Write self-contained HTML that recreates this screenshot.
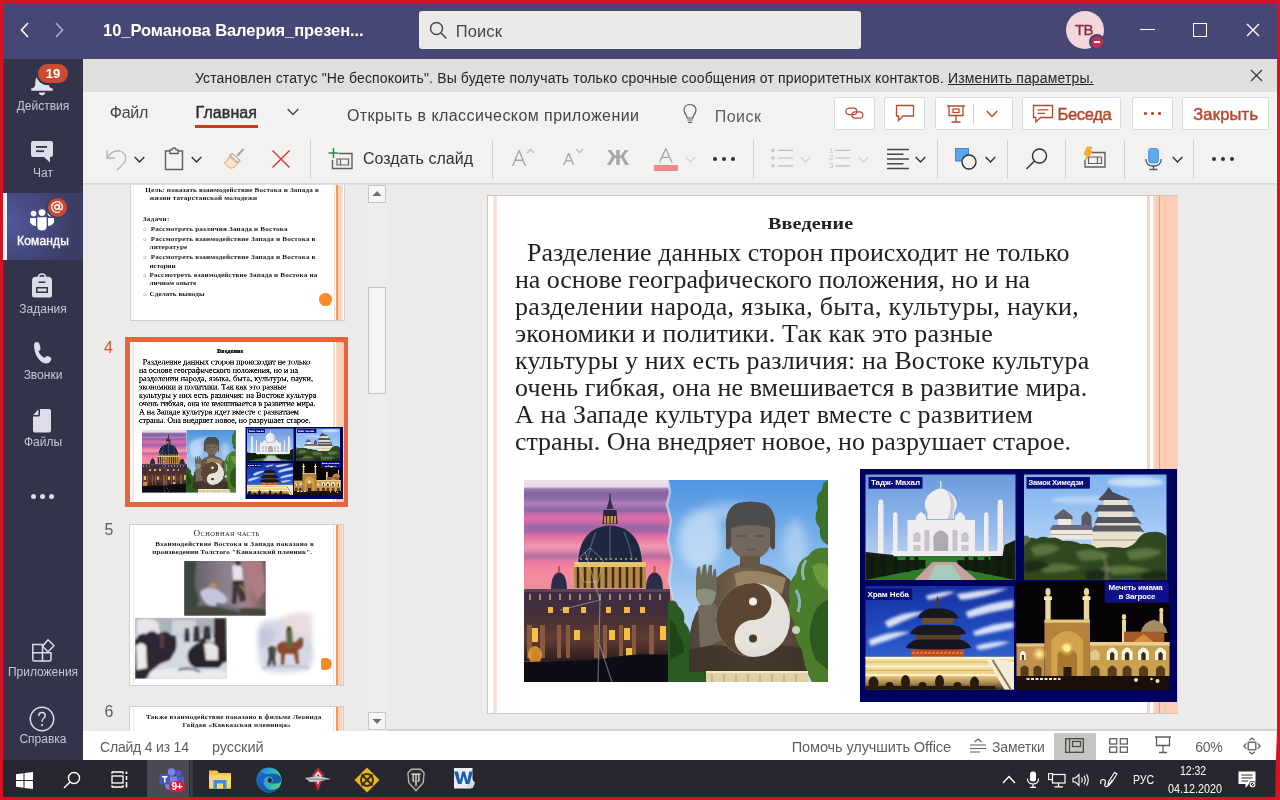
<!DOCTYPE html>
<html lang="ru">
<head>
<meta charset="utf-8">
<title>Teams</title>
<style>
*{box-sizing:border-box;margin:0;padding:0}
html,body{width:1280px;height:800px;overflow:hidden;background:#d41424;font-family:"Liberation Sans",sans-serif;}
.abs{position:absolute}
.t{position:absolute;white-space:nowrap;line-height:1}
#frame{position:absolute;left:0;top:0;width:1280px;height:800px;will-change:transform;background:#d41424;overflow:hidden}
#titlebar{position:absolute;left:3.400px;top:3.400px;width:1273.400px;height:55.600px;background:#464775}
#sidebar{position:absolute;left:3px;top:59px;width:80px;height:701px;background:#33344a}
#notif{position:absolute;left:83px;top:59px;width:1194px;height:32.500px;background:#e0dfdd}
#ribbon{position:absolute;left:83px;top:91.500px;width:1194px;height:91.500px;background:#f3f2f1}
#thumbs{position:absolute;left:83px;top:184px;width:304px;height:547px;background:#ecebe9;overflow:hidden}
#canvas{position:absolute;left:387px;top:184px;width:890px;height:547px;background:#ecebe9;overflow:hidden}
#status{position:absolute;left:83px;top:731px;width:1194px;height:29px;background:#ffffff}
#taskbar{position:absolute;left:3px;top:760px;width:1274px;height:36.500px;background:#28262f}

.lbl{position:absolute;white-space:nowrap;line-height:12px;font-size:12px;color:#c6c6d6;left:3px;width:80px;text-align:center}
.ic{position:absolute}

.btn{position:absolute;background:#fff;border:1px solid #dcdad8;border-radius:2px;top:97px;height:33px}
.sep{position:absolute;width:1px;background:#d2d0ce;top:139.500px;height:39px}
.chev{position:absolute}

.sl{position:absolute;white-space:nowrap;line-height:1;font-family:"Liberation Serif",serif;color:#222;font-size:24.600px;transform-origin:0 0}
</style>
</head>
<body>
<div id="frame">
<div id="titlebar">
<svg class="ic" style="left:16px;top:18px" width="12" height="18" viewBox="0 0 12 18"><path d="M9 2 L2.5 9 L9 16" fill="none" stroke="#ffffff" stroke-width="1.6"/></svg>
<svg class="ic" style="left:50px;top:18px" width="12" height="18" viewBox="0 0 12 18"><path d="M3 2 L9.5 9 L3 16" fill="none" stroke="#a9aad0" stroke-width="1.6"/></svg>
<span class="t" id="t_title" style="left:99.71px;top:19px;font-size:16.500px;font-weight:bold;color:#fff;letter-spacing:-0.069px">10_Романова Валерия_презен...</span>
<div class="abs" style="left:415.600px;top:7.600px;width:442px;height:38.200px;background:#eceae9;border-radius:3px"></div>
<svg class="ic" style="left:425px;top:17px" width="20" height="20" viewBox="0 0 20 20"><circle cx="8.5" cy="8.5" r="6" fill="none" stroke="#4a4a4a" stroke-width="1.5"/><path d="M13 13 L18.5 18.5" stroke="#4a4a4a" stroke-width="1.6"/></svg>
<span class="t" id="t_search" style="left:452.40px;top:19.500px;font-size:16.500px;color:#484644;letter-spacing:0.091px">Поиск</span>
<div class="abs" style="left:1062.300px;top:7.500px;width:38.500px;height:38.500px;border-radius:50%;background:#f1d6dc"></div>
<span class="t" id="t_tv" style="left:1071.500px;top:19px;font-size:15px;color:#8a2a3c;-webkit-text-stroke:0.300px #8a2a3c;letter-spacing:-0.500px">ТВ</span>
<div class="abs" style="left:1086px;top:31px;width:16px;height:16px;border-radius:50%;background:#464775"></div>
<div class="abs" style="left:1088px;top:33px;width:12px;height:12px;border-radius:50%;background:#c4314b"></div>
<div class="abs" style="left:1091px;top:38px;width:6px;height:2px;background:#fff"></div>
<div class="abs" style="left:1137px;top:25.300px;width:14.500px;height:1.100px;background:#fff"></div>
<div class="abs" style="left:1190px;top:20px;width:14px;height:14px;border:1.5px solid #fff"></div>
<svg class="ic" style="left:1243px;top:20px" width="14" height="14" viewBox="0 0 14 14"><path d="M1 1 L13 13 M13 1 L1 13" stroke="#fff" stroke-width="1.4"/></svg>
</div>
<div id="sidebar"><div class="abs" style="left:-3px;top:-59px;width:86px;height:760px">
<!-- activity -->
<svg class="ic" style="left:30px;top:74px" width="24" height="23" viewBox="0 0 24 23"><path d="M12 0.800 C7.500 0.800 5.600 4 5.400 7.500 L5.200 10.800 C5 12.800 4 13.800 2.800 14.200 L1.300 14.200 L1.300 16.800 L22.700 16.800 L22.700 14.200 L21.200 14.200 C20 13.800 19 12.800 18.800 10.800 L18.600 7.500 C18.400 4 16.500 0.800 12 0.800 Z" fill="#e2e2ee"/><path d="M8.800 18.600 L15.200 18.600 C15.200 20.300 13.800 21.400 12 21.400 C10.200 21.400 8.800 20.300 8.800 18.600 Z" fill="#e2e2ee"/></svg>
<div class="abs" style="left:36.400px;top:61.700px;width:33.200px;height:23.200px;border-radius:11.600px;background:#33344a"></div>
<div class="abs" style="left:38.400px;top:63.700px;width:29.200px;height:19.200px;border-radius:9.600px;background:#cc4a31"></div>
<span class="t" id="t_b19" style="left:45.800px;top:66.800px;font-size:13px;font-weight:bold;color:#fff">19</span>
<span class="lbl" id="t_l1" style="top:100px">Действия</span>
<!-- chat -->
<svg class="ic" style="left:30px;top:140px" width="24" height="24" viewBox="0 0 24 24"><path d="M3 1 L21 1 Q23 1 23 3 L23 15 Q23 17 21 17 L20 17 L20 22.5 L14 17 L3 17 Q1 17 1 15 L1 3 Q1 1 3 1 Z" fill="#dcdcea"/><rect x="6" y="6" width="11" height="1.8" fill="#33344a"/><rect x="6" y="10.3" width="8" height="1.8" fill="#33344a"/></svg>
<span class="lbl" id="t_l2" style="top:167px">Чат</span>
<!-- teams active -->
<div class="abs" style="left:3px;top:193px;width:80px;height:67px;background:radial-gradient(ellipse 70px 60px at 0px 30px,#5259a0,#3c3e66)"></div>
<div class="abs" style="left:3px;top:193px;width:3.5px;height:67px;background:#f3f2f8"></div>
<svg class="ic" style="left:29px;top:209px" width="26" height="22" viewBox="0 0 26 22"><circle cx="4.6" cy="4.6" r="2.8" fill="#fff"/><circle cx="21.4" cy="4.6" r="2.8" fill="#fff"/><circle cx="13" cy="3.6" r="3.4" fill="#fff"/><path d="M1 9 L7 9 L7 17 Q3.500 17 1 13.500 Z" fill="#fff"/><path d="M25 9 L19 9 L19 17 Q22.500 17 25 13.500 Z" fill="#fff"/><path d="M8.300 8.200 L17.700 8.200 L17.700 17 Q17.700 21.500 13 21.500 Q8.300 21.500 8.300 17 Z" fill="#fff"/></svg>
<div class="abs" style="left:46px;top:196px;width:22px;height:22px;border-radius:50%;background:#3c3e66"></div>
<div class="abs" style="left:47.500px;top:197.500px;width:19px;height:19px;border-radius:50%;background:#cc4a31"></div>
<svg class="ic" style="left:50px;top:200px" width="14" height="14" viewBox="0 0 14 14"><circle cx="7" cy="7" r="2.300" fill="none" stroke="#fff" stroke-width="1.400"/><path d="M9.400 4.600 L9.400 8.300 Q9.400 9.700 10.700 9.700 Q12.300 9.700 12.300 7 A5.300 5.300 0 1 0 9.800 11.500" fill="none" stroke="#fff" stroke-width="1.300"/></svg>
<span class="lbl" id="t_l3" style="top:235px;color:#fff;-webkit-text-stroke:0.400px #fff;letter-spacing:0.150px">Команды</span>
<!-- assignments -->
<svg class="ic" style="left:31px;top:273px" width="22" height="25" viewBox="0 0 22 25"><path d="M7.500 4 Q7.500 1 11 1 Q14.500 1 14.500 4" fill="none" stroke="#dcdcea" stroke-width="1.600"/><path d="M5 3.800 L17 3.800 Q21 3.800 21 8 L21 22 Q21 24.500 18.500 24.500 L3.500 24.500 Q1 24.500 1 22 L1 8 Q1 3.800 5 3.800 Z" fill="#dcdcea"/><rect x="7.500" y="8.500" width="7" height="1.500" fill="#33344a"/><rect x="5" y="14" width="12" height="6" fill="#33344a"/><rect x="6.500" y="15.500" width="9" height="3" fill="#dcdcea"/></svg>
<span class="lbl" id="t_l4" style="top:303px">Задания</span>
<!-- calls -->
<svg class="ic" style="left:32px;top:341px" width="20" height="24" viewBox="0 0 20 24"><path d="M2 4 Q2 1 5 1 Q7 1 7.500 3 L8.500 7 Q9 8.500 7.500 9.500 L6.500 10.300 Q8 14.500 12.500 17 L13.700 15.700 Q14.800 14.500 16.300 15.200 L18.500 16.300 Q20 17.200 19 19.300 Q17.500 22.500 14 22.500 Q9 22 5.500 16.500 Q2 11 2 4 Z" fill="#dcdcea"/></svg>
<span class="lbl" id="t_l5" style="top:369px">Звонки</span>
<!-- files -->
<svg class="ic" style="left:32px;top:408px" width="20" height="25" viewBox="0 0 20 25"><path d="M8 1 L17 1 Q19 1 19 3 L19 22.500 Q19 24.500 17 24.500 L3 24.500 Q1 24.500 1 22.500 L1 8.500 L6.500 8.500 Q8 8.500 8 7 Z" fill="#dcdcea"/><path d="M6.500 1.300 L6.500 7 L1.200 7 Z" fill="#dcdcea"/></svg>
<span class="lbl" id="t_l6" style="top:436px">Файлы</span>
<!-- more -->
<div class="abs" style="left:30.500px;top:493.500px;width:5px;height:5px;border-radius:50%;background:#dcdcea"></div>
<div class="abs" style="left:39.500px;top:493.500px;width:5px;height:5px;border-radius:50%;background:#dcdcea"></div>
<div class="abs" style="left:48.500px;top:493.500px;width:5px;height:5px;border-radius:50%;background:#dcdcea"></div>
<!-- apps -->
<svg class="ic" style="left:31px;top:638px" width="25" height="25" viewBox="0 0 25 25"><path d="M1.800 6.500 L11.500 6.500 L11.500 23 L3.300 23 Q1.800 23 1.800 21.500 Z M1.800 14.700 L20 14.700 L20 21.500 Q20 23 18.500 23 L11.500 23" fill="none" stroke="#dcdcea" stroke-width="1.500"/><path d="M17 1.800 L23 7.800 L17 13.800 L11.500 8.300 Z" fill="none" stroke="#dcdcea" stroke-width="1.500" stroke-linejoin="round"/></svg>
<span class="lbl" id="t_l7" style="top:666px">Приложения</span>
<!-- help -->
<svg class="ic" style="left:29px;top:706px" width="26" height="26" viewBox="0 0 26 26"><circle cx="13" cy="13" r="11.700" fill="none" stroke="#dcdcea" stroke-width="1.500"/><path d="M9.800 10 Q9.800 6.500 13 6.500 Q16.200 6.500 16.200 9.500 Q16.200 11.300 14.500 12.500 Q13 13.600 13 15.800" fill="none" stroke="#dcdcea" stroke-width="1.500"/><circle cx="13" cy="19" r="1.100" fill="#dcdcea"/></svg>
<span class="lbl" id="t_l8" style="top:733px">Справка</span>
</div></div>
<div class="abs" style="left:3px;top:59px;width:1.200px;height:134px;background:#7a2036"></div><div class="abs" style="left:4.200px;top:59px;width:1.300px;height:134px;background:#45304c"></div><div class="abs" style="left:3px;top:260px;width:1.200px;height:500px;background:#7a2036"></div><div class="abs" style="left:4.200px;top:260px;width:1.300px;height:500px;background:#45304c"></div>
<div id="notif"></div>
<span class="t" id="t_notif" style="left:195.00px;top:70.500px;font-size:14px;letter-spacing:0.137px;color:#252423">Установлен статус "Не беспокоить". Вы будете получать только срочные сообщения от приоритетных контактов. <span style="text-decoration:underline">Изменить параметры.</span></span>
<svg class="ic" style="left:1250px;top:69px" width="13" height="13" viewBox="0 0 13 13"><path d="M1 1 L12 12 M12 1 L1 12" stroke="#3b3a39" stroke-width="1.300"/></svg>
<div id="ribbon"></div>
<div class="abs" style="left:83px;top:183px;width:1194px;height:1px;background:#d6d5d3"></div>
<span class="t" id="t_file" style="left:109.75px;top:105px;font-size:16px;color:#484644;letter-spacing:-0.231px">Файл</span>
<span class="t" id="t_home" style="left:195.60px;top:105px;font-size:16px;color:#323130;-webkit-text-stroke:0.450px #323130;letter-spacing:0.082px">Главная</span>
<div class="abs" style="left:195px;top:125px;width:63px;height:3px;background:#c43e1c"></div>
<svg class="ic" style="left:287px;top:108px" width="12" height="8.5" viewBox="0 0 12 8.5"><path d="M0.700 1 L6.0 6.5 L11.3 1" fill="none" stroke="#484644" stroke-width="1.4"/></svg>
<span class="t" id="t_open" style="left:346.90px;top:108px;font-size:16px;color:#484644;letter-spacing:0.428px">Открыть в классическом приложении</span>
<svg class="ic" style="left:681px;top:103px" width="18" height="22" viewBox="0 0 18 22"><path d="M9 1.500 C5 1.500 3 4.300 3 7.200 C3 9.500 4.300 10.800 5.300 12.200 C5.900 13.100 6 13.800 6 15 L12 15 C12 13.800 12.100 13.100 12.700 12.200 C13.700 10.800 15 9.500 15 7.200 C15 4.300 13 1.500 9 1.500 Z" fill="none" stroke="#605e5c" stroke-width="1.200"/><path d="M6.300 17 L11.700 17 M7 19.300 L11 19.300" stroke="#605e5c" stroke-width="1.200"/></svg>
<span class="t" id="t_rsearch" style="left:714.70px;top:108.500px;font-size:16px;color:#605e5c;letter-spacing:0.489px">Поиск</span>
<div class="btn" style="left:834px;width:41px"></div>
<svg class="ic" style="left:845px;top:107px" width="19" height="13" viewBox="0 0 19 13"><rect x="0.800" y="1.200" width="11" height="6.400" rx="3.200" fill="none" stroke="#b7472a" stroke-width="1.200"/><rect x="6.800" y="4.800" width="11" height="6.400" rx="3.200" fill="none" stroke="#b7472a" stroke-width="1.200"/></svg>
<div class="btn" style="left:884px;width:41px"></div>
<svg class="ic" style="left:895px;top:104px" width="20" height="18" viewBox="0 0 20 18"><path d="M1.500 1.500 L18.500 1.500 L18.500 12 L8 12 L3.500 16.500 L3.500 12 L1.500 12 Z" fill="none" stroke="#b7472a" stroke-width="1.300"/></svg>
<div class="btn" style="left:935px;width:78px"></div>
<svg class="ic" style="left:946px;top:104px" width="20" height="20" viewBox="0 0 20 20"><path d="M1 2 L19 2 M3 2 L3 11.500 L17 11.500 L17 2 M10 11.500 L10 17.500 M5.500 18 L14.500 18" fill="none" stroke="#b7472a" stroke-width="1.300"/><rect x="7" y="5" width="6" height="3.500" fill="none" stroke="#b7472a" stroke-width="1.200"/></svg>
<div class="abs" style="left:973px;top:104px;width:1px;height:20px;background:#d2d0ce"></div>
<svg class="ic" style="left:986px;top:110px" width="12" height="8.5" viewBox="0 0 12 8.5"><path d="M0.700 1 L6.0 6.5 L11.3 1" fill="none" stroke="#b7472a" stroke-width="1.4"/></svg>
<div class="btn" style="left:1022px;width:99px"></div>
<svg class="ic" style="left:1032px;top:104px" width="22" height="20" viewBox="0 0 22 20"><path d="M1.500 1.500 L20.500 1.500 L20.500 13.500 L8.500 13.500 L3.800 18 L3.800 13.500 L1.500 13.500 Z" fill="none" stroke="#b7472a" stroke-width="1.300"/><path d="M5.500 5.800 L16.500 5.800 M5.500 9.300 L13 9.300" stroke="#b7472a" stroke-width="1.200"/></svg>
<span class="t" id="t_beseda" style="left:1057.50px;top:105.500px;font-size:16.500px;color:#b7472a;-webkit-text-stroke:0.450px #b7472a;letter-spacing:-0.355px">Беседа</span>
<div class="btn" style="left:1132px;width:41px"></div>
<div class="abs" style="left:1144px;top:112px;width:2.500px;height:2.500px;border-radius:50%;background:#b7472a"></div>
<div class="abs" style="left:1151px;top:112px;width:2.500px;height:2.500px;border-radius:50%;background:#b7472a"></div>
<div class="abs" style="left:1158px;top:112px;width:2.500px;height:2.500px;border-radius:50%;background:#b7472a"></div>
<div class="btn" style="left:1182px;width:87px"></div>
<span class="t" id="t_close" style="left:1193.20px;top:105.500px;font-size:16.500px;color:#b7472a;-webkit-text-stroke:0.450px #b7472a;letter-spacing:0.206px">Закрыть</span>

<!-- toolbar -->
<svg class="ic" style="left:105px;top:147px" width="24" height="24" viewBox="0 0 24 24"><path d="M2 3 L2 11 L10 11" fill="none" stroke="#b3b0ad" stroke-width="1.300"/><path d="M2.500 10.500 Q8 2.500 15 4 Q21.500 6 20.500 12.500 Q20 16 12 23" fill="none" stroke="#b3b0ad" stroke-width="1.300"/></svg>
<svg class="ic" style="left:134px;top:156px" width="11" height="8" viewBox="0 0 11 8"><path d="M0.700 1 L5.5 6 L10.3 1" fill="none" stroke="#323130" stroke-width="1.4"/></svg>
<svg class="ic" style="left:164px;top:147px" width="20" height="24" viewBox="0 0 20 24"><path d="M6 4 L1.500 4 L1.500 22.500 L18.500 22.500 L18.500 4 L14 4" fill="none" stroke="#605e5c" stroke-width="1.400"/><path d="M6 6.500 L6 2.800 L8 2.800 Q8 1 10 1 Q12 1 12 2.800 L14 2.800 L14 6.500 Z" fill="none" stroke="#605e5c" stroke-width="1.300"/></svg>
<svg class="ic" style="left:191px;top:156px" width="11" height="8" viewBox="0 0 11 8"><path d="M0.700 1 L5.5 6 L10.3 1" fill="none" stroke="#323130" stroke-width="1.4"/></svg>
<svg class="ic" style="left:223px;top:147px" width="23" height="24" viewBox="0 0 23 24"><path d="M20.500 2 L14 9" stroke="#a8a6a4" stroke-width="2.200"/><path d="M9 6.500 L17 13.500 L15 15.500 L7 8.500 Z" fill="#fff" stroke="#a8a6a4" stroke-width="1.100"/><path d="M6.500 9.500 L14.500 16.500 Q11 22 7.500 21 Q4.500 20 1.500 16 Q5 13.500 6.500 9.500 Z" fill="#fbe3cc" stroke="#e8b68a" stroke-width="1.100"/></svg>
<svg class="ic" style="left:271px;top:149px" width="20" height="20" viewBox="0 0 20 20"><path d="M1.500 1.500 L18.500 18.500 M18.500 1.500 L1.500 18.500" stroke="#d13438" stroke-width="1.400"/></svg>
<div class="sep" style="left:310px"></div>
<svg class="ic" style="left:327.500px;top:146.500px" width="26" height="24" viewBox="0 0 26 24"><path d="M11 6.500 L24 6.500 L24 21.500 L4.500 21.500 L4.500 13" fill="none" stroke="#605e5c" stroke-width="1.400"/><path d="M9 12 L20.500 12 L20.500 18 L9 18 Z M12.500 12 L12.500 18" fill="none" stroke="#605e5c" stroke-width="1.200"/><path d="M5.500 1 L5.500 11 M0.500 6 L10.500 6" stroke="#2e8b3d" stroke-width="1.500"/></svg>
<span class="t" id="t_new" style="left:363.00px;top:151px;font-size:16px;color:#323130;letter-spacing:0.020px">Создать слайд</span>
<div class="sep" style="left:492px"></div>
<svg class="ic" style="left:512.3px;top:149.5px" width="14" height="16" viewBox="0 0 14 16"><path d="M0.600 16 L7.0 0.500 L13.4 16 M3.08 10.24 L10.92 10.24" fill="none" stroke="#a6a4a2" stroke-width="1.3" stroke-linejoin="miter"/></svg>
<svg class="ic" style="left:526px;top:148px" width="9" height="6" viewBox="0 0 9 6"><path d="M1 5 L4.500 1.500 L8 5" fill="none" stroke="#a4c8ea" stroke-width="1.600"/></svg>
<svg class="ic" style="left:562.6px;top:153.3px" width="11.4" height="12.2" viewBox="0 0 11.4 12.2"><path d="M0.600 12.2 L5.7 0.500 L10.8 12.2 M2.51 7.81 L8.89 7.81" fill="none" stroke="#a6a4a2" stroke-width="1.3" stroke-linejoin="miter"/></svg>
<svg class="ic" style="left:575px;top:148px" width="9" height="6" viewBox="0 0 9 6"><path d="M1 1 L4.500 4.500 L8 1" fill="none" stroke="#a4c8ea" stroke-width="1.600"/></svg>
<span class="t" id="t_zh" style="left:607px;top:147px;font-size:22px;font-weight:bold;color:#a8a6a4;transform:scaleX(1.100);transform-origin:0 0">Ж</span>
<svg class="ic" style="left:659.2px;top:148px" width="13.6" height="14.6" viewBox="0 0 13.6 14.6"><path d="M0.600 14.6 L6.8 0.500 L13.0 14.6 M2.99 9.34 L10.61 9.34" fill="none" stroke="#a6a4a2" stroke-width="1.3" stroke-linejoin="miter"/></svg>
<div class="abs" style="left:654px;top:165px;width:24px;height:6px;background:#f1888c"></div>
<svg class="ic" style="left:685px;top:156px" width="11" height="8" viewBox="0 0 11 8"><path d="M0.700 1 L5.5 6 L10.3 1" fill="none" stroke="#d6d4d2" stroke-width="1.3"/></svg><div class="abs" style="left:712.5px;top:156.5px;width:4px;height:4px;border-radius:50%;background:#323130"></div><div class="abs" style="left:721.5px;top:156.5px;width:4px;height:4px;border-radius:50%;background:#323130"></div><div class="abs" style="left:730.5px;top:156.5px;width:4px;height:4px;border-radius:50%;background:#323130"></div>
<div class="sep" style="left:753px"></div>
<svg class="ic" style="left:771px;top:147px" width="24" height="22" viewBox="0 0 24 22"><rect x="0.500" y="1.800" width="3" height="3" fill="#a9cbe8"/><rect x="0.500" y="9.500" width="3" height="3" fill="#a9cbe8"/><rect x="0.500" y="17.300" width="3" height="3" fill="#a9cbe8"/><path d="M7 3.300 L22 3.300 M7 11 L22 11 M7 18.800 L22 18.800" stroke="#bebcba" stroke-width="1.200"/></svg>
<svg class="ic" style="left:800px;top:156px" width="11" height="8" viewBox="0 0 11 8"><path d="M0.700 1 L5.5 6 L10.3 1" fill="none" stroke="#d6d4d2" stroke-width="1.3"/></svg>
<svg class="ic" style="left:828px;top:147px" width="24" height="22" viewBox="0 0 24 22"><path d="M7.500 3.300 L22 3.300 M7.500 11 L22 11 M7.500 18.800 L22 18.800" stroke="#bebcba" stroke-width="1.200"/></svg>
<span class="t" style="left:829px;top:146.500px;font-size:8px;color:#a9cbe8">1</span>
<span class="t" style="left:829px;top:154.200px;font-size:8px;color:#a9cbe8">2</span>
<span class="t" style="left:829px;top:162px;font-size:8px;color:#a9cbe8">3</span>
<svg class="ic" style="left:858px;top:156px" width="11" height="8" viewBox="0 0 11 8"><path d="M0.700 1 L5.5 6 L10.3 1" fill="none" stroke="#d6d4d2" stroke-width="1.3"/></svg>
<svg class="ic" style="left:887px;top:147.500px" width="22" height="22" viewBox="0 0 22 22"><path d="M0 1.500 L22 1.500 M0 6.250 L16.500 6.250 M0 11 L22 11 M0 15.750 L16.500 15.750 M0 20.500 L22 20.500" stroke="#484644" stroke-width="1.300"/></svg>
<svg class="ic" style="left:915px;top:156px" width="11" height="8" viewBox="0 0 11 8"><path d="M0.700 1 L5.5 6 L10.3 1" fill="none" stroke="#323130" stroke-width="1.4"/></svg>
<div class="sep" style="left:937px"></div>
<svg class="ic" style="left:954px;top:147px" width="25" height="24" viewBox="0 0 25 24"><rect x="1.500" y="1.500" width="13" height="12.500" fill="#5aa5ee" stroke="#3b86d6" stroke-width="1"/><circle cx="15" cy="15" r="7" fill="#f3f2f1" stroke="#323130" stroke-width="1.400"/></svg>
<svg class="ic" style="left:985px;top:156px" width="11" height="8" viewBox="0 0 11 8"><path d="M0.700 1 L5.5 6 L10.3 1" fill="none" stroke="#323130" stroke-width="1.4"/></svg>
<div class="sep" style="left:1007px"></div>
<svg class="ic" style="left:1025px;top:147px" width="24" height="24" viewBox="0 0 24 24"><circle cx="14.500" cy="9" r="7" fill="none" stroke="#323130" stroke-width="1.400"/><path d="M9.500 14 L1.500 22" stroke="#323130" stroke-width="1.500"/></svg>
<div class="sep" style="left:1065px"></div>
<svg class="ic" style="left:1082px;top:146px" width="26" height="24" viewBox="0 0 26 24"><path d="M6 6.500 L23 6.500 L23 21 L3 21 L3 14" fill="none" stroke="#605e5c" stroke-width="1.400"/><path d="M6.500 11 L19.500 11 L19.500 17.500 L6.500 17.500 Z M15.500 11 L15.500 17.500" fill="none" stroke="#605e5c" stroke-width="1.200"/><path d="M5 1 L10 1 L7.500 5.500 L10.500 5.500 L3 15 L5 8.500 L2 8.500 Z" fill="#f7b23a" stroke="#e08e1a" stroke-width="0.600"/></svg>
<div class="sep" style="left:1124px"></div>
<svg class="ic" style="left:1143px;top:147px" width="21" height="24" viewBox="0 0 21 24"><rect x="5.600" y="1.500" width="9.800" height="14.500" rx="2.500" fill="#62aaee" stroke="#3b86d6" stroke-width="0.800"/><path d="M2.800 12 Q2.800 19 10.500 19 Q18.200 19 18.200 12" fill="none" stroke="#4a5a6a" stroke-width="1.300"/><path d="M10.500 19 L10.500 22.500 M6.500 22.500 L14.500 22.500" stroke="#4a5a6a" stroke-width="1.300"/></svg>
<svg class="ic" style="left:1171.5px;top:156px" width="11" height="8" viewBox="0 0 11 8"><path d="M0.700 1 L5.5 6 L10.3 1" fill="none" stroke="#323130" stroke-width="1.4"/></svg>
<div class="sep" style="left:1193px"></div>
<div class="abs" style="left:1211.5px;top:156.5px;width:4px;height:4px;border-radius:50%;background:#323130"></div><div class="abs" style="left:1220.5px;top:156.5px;width:4px;height:4px;border-radius:50%;background:#323130"></div><div class="abs" style="left:1229.5px;top:156.5px;width:4px;height:4px;border-radius:50%;background:#323130"></div>
<!--THUMBS--><div id="thumbs"><div class="abs" style="left:-83px;top:-184px;width:1280px;height:800px">
<div class="abs" style="left:366px;top:184px;width:21px;height:547px;background:#eeedeb"></div>
<div class="abs" style="left:386.500px;top:184px;width:1px;height:547px;background:#d8d7d5"></div>
<div class="abs" style="left:367.500px;top:184.500px;width:18px;height:18px;background:#f6f6f6;border:1px solid #c6c6c6"></div>
<svg class="ic" style="left:371.500px;top:190px" width="10" height="7" viewBox="0 0 10 7"><path d="M0.500 6 L5 1 L9.500 6 Z" fill="#6e6e72"/></svg>
<div class="abs" style="left:367.500px;top:286.500px;width:18px;height:107px;background:#f5f5f5;border:1px solid #c4c4c4"></div>
<div class="abs" style="left:367.500px;top:711.500px;width:18px;height:18px;background:#f6f6f6;border:1px solid #c6c6c6"></div>
<svg class="ic" style="left:371.500px;top:718px" width="10" height="7" viewBox="0 0 10 7"><path d="M0.500 1 L5 6 L9.500 1 Z" fill="#6e6e72"/></svg>
<div class="abs" style="left:129.5px;top:158.5px;width:215px;height:162px;background:#fff;border:1px solid #cfcecd"></div>
<div class="abs" style="left:132.7px;top:159.5px;width:1.200px;height:160px;background:#fcebe2"></div><div class="abs" style="left:333.5px;top:159.5px;width:1px;height:160px;background:#fbe3d6"></div><div class="abs" style="left:336.0px;top:159.5px;width:2px;height:160px;background:#f59858"></div><div class="abs" style="left:338.0px;top:159.5px;width:3.700px;height:160px;background:#fcd4bc"></div><div class="abs" style="left:341.7px;top:159.5px;width:1.800px;height:160px;background:#fde6da"></div>
<div class="abs" style="left:319px;top:293px;width:12.800px;height:12.800px;border-radius:50%;background:#f98a2c"></div>
<div class="abs" style="left:130.5px;top:159.5px;width:690px;height:518px;transform:scale(0.3087);transform-origin:0 0">
<span class="sl" id="t_3_0" style="left:46.33px;top:86.6px;font-size:21px;font-weight:bold;color:#1a1a1a;transform:scaleX(1.100);letter-spacing:0.503px">Цель: показать взаимодействие Востока и Запада в</span>
<span class="sl" id="t_3_1" style="left:59.94px;top:112.5px;font-size:21px;font-weight:bold;color:#1a1a1a;transform:scaleX(1.100);letter-spacing:0.507px">жизни татарстанской молодежи</span>
<span class="sl" id="t_3_2" style="left:38.24px;top:179.8px;font-size:21px;font-weight:bold;color:#1a1a1a;transform:scaleX(1.100);letter-spacing:0.969px">Задачи:</span>
<span class="sl" id="t_3_3" style="left:64.15px;top:213.0px;font-size:21px;font-weight:bold;color:#1a1a1a;transform:scaleX(1.100);letter-spacing:0.521px">Рассмотреть различия Запада и Востока</span>
<span class="sl" style="left:39.8px;top:214.0px;font-size:18px;color:#f08030;font-family:'Liberation Sans',sans-serif">o</span>
<span class="sl" id="t_3_4" style="left:64.15px;top:245.0px;font-size:21px;font-weight:bold;color:#1a1a1a;transform:scaleX(1.100);letter-spacing:0.539px">Рассмотреть взаимодействие Запада и Востока в</span>
<span class="sl" style="left:39.8px;top:246.0px;font-size:18px;color:#f08030;font-family:'Liberation Sans',sans-serif">o</span>
<span class="sl" id="t_3_5" style="left:59.94px;top:272.2px;font-size:21px;font-weight:bold;color:#1a1a1a;transform:scaleX(1.100);letter-spacing:0.480px">литературе</span>
<span class="sl" id="t_3_6" style="left:64.15px;top:303.7px;font-size:21px;font-weight:bold;color:#1a1a1a;transform:scaleX(1.100);letter-spacing:0.539px">Рассмотреть взаимодействие Запада и Востока в</span>
<span class="sl" style="left:39.8px;top:304.7px;font-size:18px;color:#f08030;font-family:'Liberation Sans',sans-serif">o</span>
<span class="sl" id="t_3_7" style="left:59.94px;top:332.8px;font-size:21px;font-weight:bold;color:#1a1a1a;transform:scaleX(1.100);letter-spacing:-0.213px">истории</span>
<span class="sl" id="t_3_8" style="left:59.94px;top:362.0px;font-size:21px;font-weight:bold;color:#1a1a1a;transform:scaleX(1.100);letter-spacing:0.473px">Рассмотреть взаимодействие Запада и Востока на</span>
<span class="sl" style="left:39.8px;top:363.0px;font-size:18px;color:#f08030;font-family:'Liberation Sans',sans-serif">o</span>
<span class="sl" id="t_3_9" style="left:59.94px;top:389.2px;font-size:21px;font-weight:bold;color:#1a1a1a;transform:scaleX(1.100);letter-spacing:0.101px">личном опыте</span>
<span class="sl" id="t_3_10" style="left:59.94px;top:422.9px;font-size:21px;font-weight:bold;color:#1a1a1a;transform:scaleX(1.100);letter-spacing:0.200px">Сделать выводы</span>
<span class="sl" style="left:39.8px;top:423.9px;font-size:18px;color:#f08030;font-family:'Liberation Sans',sans-serif">o</span>
</div>
<div class="abs" style="left:125px;top:337.300px;width:223.200px;height:169.500px;background:#e5643c"></div>
<div class="abs" style="left:129.7px;top:341.8px;width:213.700px;height:160.200px;background:#fff"></div>
<div class="abs" style="left:132.4px;top:342px;width:1.200px;height:160px;background:#fcebe2"></div><div class="abs" style="left:333.2px;top:342px;width:1px;height:160px;background:#fbe3d6"></div><div class="abs" style="left:335.7px;top:342px;width:2px;height:160px;background:#f59858"></div><div class="abs" style="left:337.7px;top:342px;width:3.700px;height:160px;background:#fcd4bc"></div><div class="abs" style="left:341.4px;top:342px;width:1.800px;height:160px;background:#fde6da"></div>
<div class="abs" style="left:-20.29px;top:281.65px;width:1280px;height:800px;transform:scale(0.3087);transform-origin:0 0;-webkit-text-stroke:0.900px #222"><div class="abs" style="left:493px;top:196px;width:4px;height:517px;background:linear-gradient(90deg,#fdeee8,#f8d8cc 50%,#fcece4)"></div>
<div class="abs" style="left:1146.500px;top:196px;width:3px;height:517px;background:#f9d3c7"></div>
<div class="abs" style="left:1153px;top:196px;width:24.500px;height:517px;background:#fdcdb8"></div>
<div class="abs" style="left:1153px;top:196px;width:1.500px;height:517px;background:#f7dccf"></div>
<div class="abs" style="left:1159px;top:196px;width:1.200px;height:517px;background:#e29c7e"></div>
<div class="abs" style="left:1165px;top:196px;width:1px;height:517px;background:#f6bfa6"></div>
<svg class="ic" style="left:524px;top:480px" width="304" height="202" viewBox="524 480 304 202"><use href="#g_img1"/></svg>
<svg class="ic" style="left:859.500px;top:469px" width="317.500" height="233" viewBox="859.500 469 317.500 233"><use href="#g_img2"/></svg>
<span class="t" style="-webkit-text-stroke:0;left:871px;top:479px;font-size:8px;font-weight:bold;color:#fff;letter-spacing:-0.100px">Тадж- Махал</span>
<span class="t" style="-webkit-text-stroke:0;left:1028.500px;top:479.300px;font-size:7.600px;font-weight:bold;color:#fff;letter-spacing:-0.250px">Замок Химедзи</span>
<span class="t" style="-webkit-text-stroke:0;left:867.500px;top:590.500px;font-size:8px;font-weight:bold;color:#fff;letter-spacing:-0.100px">Храм Неба</span>
<span class="t" style="-webkit-text-stroke:0;left:1108.500px;top:584px;font-size:8px;font-weight:bold;color:#fff;letter-spacing:-0.200px">Мечеть имама</span>
<span class="t" style="-webkit-text-stroke:0;left:1118.500px;top:593.200px;font-size:8px;font-weight:bold;color:#fff;letter-spacing:-0.200px">в Загросе</span>

<span class="sl" style="left:767.71px;top:215.300px;font-size:17px;font-weight:bold;color:#222;transform:scaleX(1.180);letter-spacing:0.154px">Введение</span>
<span class="sl" style="left:527.40px;top:247.20px;transform:scaleX(1.055);letter-spacing:0.042px">Разделение данных сторон происходит не только</span>
<span class="sl" style="left:515.30px;top:274.23px;transform:scaleX(1.055);letter-spacing:-0.058px">на основе географического положения, но и на</span>
<span class="sl" style="left:515.30px;top:301.26px;transform:scaleX(1.055);letter-spacing:0.314px">разделении народа, языка, быта, культуры, науки,</span>
<span class="sl" style="left:515.30px;top:328.29px;transform:scaleX(1.055);letter-spacing:0.157px">экономики и политики. Так как это разные</span>
<span class="sl" style="left:515.30px;top:355.32px;transform:scaleX(1.055);letter-spacing:0.133px">культуры у них есть различия: на Востоке культура</span>
<span class="sl" style="left:515.30px;top:382.35px;transform:scaleX(1.055);letter-spacing:0.113px">очень гибкая, она не вмешивается в развитие мира.</span>
<span class="sl" style="left:515.30px;top:409.38px;transform:scaleX(1.055);letter-spacing:0.167px">А на Западе культура идет вместе с развитием</span>
<span class="sl" style="left:515.30px;top:436.41px;transform:scaleX(1.055);letter-spacing:-0.033px">страны. Она внедряет новое, но разрушает старое.</span>
</div>
<span class="t" id="t_n4" style="left:104px;top:340px;font-size:16px;color:#d2552f">4</span>
<div class="abs" style="left:129.4px;top:523.5px;width:215px;height:162px;background:#fff;border:1px solid #cfcecd"></div>
<div class="abs" style="left:132.6px;top:524.5px;width:1.200px;height:160px;background:#fcebe2"></div><div class="abs" style="left:333.4px;top:524.5px;width:1px;height:160px;background:#fbe3d6"></div><div class="abs" style="left:335.9px;top:524.5px;width:2px;height:160px;background:#f59858"></div><div class="abs" style="left:337.9px;top:524.5px;width:3.700px;height:160px;background:#fcd4bc"></div><div class="abs" style="left:341.6px;top:524.5px;width:1.800px;height:160px;background:#fde6da"></div>
<span class="t" id="t_n5" style="left:104.500px;top:522px;font-size:16px;color:#605e5c">5</span>
<div class="abs" style="left:320.500px;top:657.500px;width:11px;height:12.800px;border-radius:3px 6.400px 6.400px 3px;background:#f98a2c"></div>
<!--S5IMG--><svg class="ic" style="left:130px;top:555px" width="215" height="130" viewBox="130 555 215 130">
<defs>
<filter id="bl5" x="-10%" y="-10%" width="120%" height="120%"><feGaussianBlur stdDeviation="0.800"/></filter>
<filter id="bl6" x="-20%" y="-20%" width="140%" height="140%"><feGaussianBlur stdDeviation="2.500"/></filter>
<linearGradient id="gA" x1="0" y1="0" x2="1" y2="0"><stop offset="0" stop-color="#4e5250"/><stop offset="0.200" stop-color="#6c6a70"/><stop offset="0.500" stop-color="#8d7f8e"/><stop offset="0.800" stop-color="#a47c86"/><stop offset="1" stop-color="#6a5a60"/></linearGradient>
<clipPath id="cA"><rect x="184.200" y="561" width="81.600" height="54.700"/></clipPath>
<clipPath id="cB"><rect x="135" y="617.700" width="91.800" height="61.100"/></clipPath>
</defs>
<!-- A -->
<g clip-path="url(#cA)">
<rect x="184.200" y="561" width="81.600" height="54.700" fill="url(#gA)"/>
<g filter="url(#bl5)">
<path d="M184 561 L196 561 L194 585 L199 600 L192 616 L184 616 Z" fill="#3c4440"/>
<path d="M246 561 L262 561 L266 590 L258 600 L250 585 Z" fill="#b07a84"/>
<path d="M200 592 Q206 586 214 588 Q224 592 228 600 Q222 608 210 606 Q202 602 200 592 Z" fill="#c4c4dc"/>
<ellipse cx="213" cy="586" rx="3.500" ry="3" fill="#b89070"/>
<path d="M232 566 Q237 563 242 567 L243 580 L233 581 Z" fill="#e4e4ea"/>
<ellipse cx="238" cy="563.500" rx="2.500" ry="2.500" fill="#3a3030"/>
<path d="M233 580 L243 580 L246 600 L240 602 L238 590 L236 604 L232 604 Z" fill="#3a3438"/>
<path d="M240 585 L252 600 L258 598" stroke="#a07860" stroke-width="2" fill="none"/>
<path d="M184 608 Q210 602 230 610 Q250 606 266 610 L266 616 L184 616 Z" fill="#44463e"/>
<path d="M216 604 Q230 606 240 612" stroke="#6a6a80" stroke-width="3" fill="none"/>
</g></g>
<!-- B -->
<g clip-path="url(#cB)">
<rect x="135" y="617.700" width="91.800" height="61.100" fill="#c5ccd6"/>
<g filter="url(#bl5)">
<rect x="135" y="617.700" width="91.800" height="16" fill="#aab2bc"/>
<path d="M137 620 Q148 616 158 622 L160 634 L137 634 Z" fill="#e4e6e8"/>
<path d="M172 620 L196 620 L196 634 L172 634 Z" fill="#d0d4d8"/>
<path d="M135 634 Q160 640 190 636 Q210 640 227 636 L227 679 L135 679 Z" fill="#d4dae2"/>
<path d="M135 640 Q140 632 146 634 Q152 628 158 634 Q166 628 172 636 Q178 632 176 650 L170 660 L160 664 L150 672 L146 679 L135 679 Z" fill="#2e2630"/>
<path d="M136 646 Q141 640 146 646 L147 668 L137 670 Z" fill="#ecece8"/>
<rect x="160" y="634" width="4" height="14" fill="#5a3a40"/>
<path d="M185 628 L189 628 L190 642 L184 642 Z M194 626 L199 626 L200 642 L193 642 Z M204 626 L210 626 L211 640 L203 640 Z" fill="#38303a"/>
<path d="M214 618 L226 618 L227 662 L218 664 L214 640 Z" fill="#30262a"/>
<path d="M188 652 Q196 640 206 642 Q216 640 222 652 Q226 664 218 668 L196 668 Q186 664 188 652 Z" fill="#2a222a"/>
<path d="M204 644 Q212 640 218 648 L218 660 L206 660 Z" fill="#e6e6e4"/>
<ellipse cx="203" cy="641" rx="3" ry="3" fill="#3a2a28"/>
<path d="M150 672 Q180 664 200 672 Q215 668 227 672 L227 679 L150 679 Z" fill="#e8ecf0"/>
<path d="M178 670 Q190 666 200 672" stroke="#5a5a60" stroke-width="2" fill="none"/>
</g></g>
<!-- C -->
<g filter="url(#bl6)">
<path d="M258 628 Q262 618 276 620 Q290 612 306 614 Q314 620 312 640 Q316 660 308 670 Q290 674 270 672 Q256 668 258 650 Z" fill="#d6d8e6"/>
<path d="M284 616 Q300 610 312 614 L312 640 Q300 630 284 636 Z" fill="#e8dcdc"/>
<path d="M258 630 Q268 624 276 632 L270 646 L258 648 Z" fill="#c4c6dc"/>
</g>
<g filter="url(#bl5)">
<path d="M277 646 Q280 640 288 642 L296 642 Q300 636 303 638 L303 646 Q300 650 298 650 L299 664 L296 664 L294 654 L285 654 L284 665 L281 665 L281 654 Q276 652 277 646 Z" fill="#8c4a30"/>
<path d="M286 630 Q289 627 292 630 L293 646 L287 648 Z" fill="#5c6c48"/>
<ellipse cx="289" cy="628.500" rx="2" ry="2" fill="#2a2420"/>
<path d="M268 648 Q272 644 276 648 L275 658 L276 666 L273 666 L272 660 L270 666 L267 666 L269 656 Z" fill="#484a40"/>
<path d="M262 668 Q285 664 310 668" stroke="#b0b4c4" stroke-width="1.500" fill="none"/>
<ellipse cx="308" cy="648" rx="3" ry="4" fill="#c8d8d0" opacity="0.800"/>
</g>
</svg>
<!--/S5IMG-->
<div class="abs" style="left:130.4px;top:524.5px;width:690px;height:518px;transform:scale(0.3087);transform-origin:0 0">
<span class="sl" id="t_5_0" style="left:206.06px;top:15.1px;font-size:27px;font-variant:small-caps;color:#1a1a1a;transform:scaleX(1.100);letter-spacing:1.078px">Основная часть</span>
<span class="sl" id="t_5_1" style="left:81.67px;top:50.2px;font-size:21px;font-weight:bold;color:#1a1a1a;transform:scaleX(1.100);letter-spacing:0.875px">Взаимодействие Востока и Запада показано в</span>
<span class="sl" id="t_5_2" style="left:71.63px;top:77.6px;font-size:21px;font-weight:bold;color:#1a1a1a;transform:scaleX(1.100);letter-spacing:0.373px">произведении Толстого "Кавказский пленник".</span>
</div>
<div class="abs" style="left:129.4px;top:705.5px;width:215px;height:40px;background:#fff;border:1px solid #cfcecd"></div>
<div class="abs" style="left:132.6px;top:706.5px;width:1.200px;height:30px;background:#fcebe2"></div><div class="abs" style="left:333.4px;top:706.5px;width:1px;height:30px;background:#fbe3d6"></div><div class="abs" style="left:335.9px;top:706.5px;width:2px;height:30px;background:#f59858"></div><div class="abs" style="left:337.9px;top:706.5px;width:3.700px;height:30px;background:#fcd4bc"></div><div class="abs" style="left:341.6px;top:706.5px;width:1.800px;height:30px;background:#fde6da"></div>
<span class="t" id="t_n6" style="left:104.500px;top:704px;font-size:16px;color:#605e5c">6</span>
<div class="abs" style="left:130.4px;top:706.5px;width:690px;height:518px;transform:scale(0.3087);transform-origin:0 0">
<span class="sl" id="t_6_0" style="left:51.54px;top:22.8px;font-size:21px;font-weight:bold;color:#1a1a1a;transform:scaleX(1.100);letter-spacing:0.601px">Также взаимодействие показано в фильме Леонида</span>
<span class="sl" id="t_6_1" style="left:170.10px;top:48.4px;font-size:21px;font-weight:bold;color:#1a1a1a;transform:scaleX(1.100);letter-spacing:0.654px">Гайдая «Кавказская пленница»</span>
</div>
</div></div><!--/THUMBS-->
<div id="canvas"><div class="abs" style="left:-387px;top:-184px;width:1280px;height:800px">
<div class="abs" id="slide" style="left:487px;top:195px;width:691px;height:519px;background:#fff;border:1px solid #c6c5c3;overflow:hidden"></div>
<!--SLIDE4--><div class="abs" style="left:493px;top:196px;width:4px;height:517px;background:linear-gradient(90deg,#fdeee8,#f8d8cc 50%,#fcece4)"></div>
<div class="abs" style="left:1146.500px;top:196px;width:3px;height:517px;background:#f9d3c7"></div>
<div class="abs" style="left:1153px;top:196px;width:24.500px;height:517px;background:#fdcdb8"></div>
<div class="abs" style="left:1153px;top:196px;width:1.500px;height:517px;background:#f7dccf"></div>
<div class="abs" style="left:1159px;top:196px;width:1.200px;height:517px;background:#e29c7e"></div>
<div class="abs" style="left:1165px;top:196px;width:1px;height:517px;background:#f6bfa6"></div>
<!--IMG1--><svg class="ic" style="left:524px;top:480px" width="304" height="202" viewBox="524 480 304 202">
<defs>
<linearGradient id="sky1" x1="0" y1="0" x2="0" y2="1">
<stop offset="0.0000" stop-color="#e8e0e8"/><stop offset="0.0322" stop-color="#e6dce8"/><stop offset="0.0446" stop-color="#9a7cb0"/><stop offset="0.0644" stop-color="#8666a6"/><stop offset="0.0941" stop-color="#8e6aa8"/><stop offset="0.1139" stop-color="#b080b8"/><stop offset="0.1337" stop-color="#9a72b0"/><stop offset="0.1485" stop-color="#8868a8"/><stop offset="0.1683" stop-color="#c468a8"/><stop offset="0.1881" stop-color="#de6ea8"/><stop offset="0.2129" stop-color="#c468a6"/><stop offset="0.2327" stop-color="#9868a8"/><stop offset="0.2574" stop-color="#a868a6"/><stop offset="0.2772" stop-color="#e470a2"/><stop offset="0.3020" stop-color="#ec80a8"/><stop offset="0.3267" stop-color="#f098b2"/><stop offset="0.3515" stop-color="#e088aa"/><stop offset="0.3762" stop-color="#b070a2"/><stop offset="0.4010" stop-color="#e478a0"/><stop offset="0.4356" stop-color="#f484a0"/><stop offset="0.4851" stop-color="#f48c9e"/><stop offset="0.5446" stop-color="#ec8c98"/><stop offset="0.6188" stop-color="#b06878"/><stop offset="1.0000" stop-color="#503040"/>
</linearGradient>
<linearGradient id="sky2" x1="0" y1="0" x2="0" y2="1">
<stop offset="0" stop-color="#4f95e2"/><stop offset="0.300" stop-color="#79b0ea"/><stop offset="0.600" stop-color="#a9cdf2"/><stop offset="1" stop-color="#c5dcf4"/>
</linearGradient>
<linearGradient id="fac" x1="0" y1="0" x2="0" y2="1">
<stop offset="0" stop-color="#3a2c44"/><stop offset="0.350" stop-color="#44303c"/><stop offset="0.450" stop-color="#4c3234"/><stop offset="0.700" stop-color="#5e3c32"/><stop offset="1" stop-color="#2a1c20"/>
</linearGradient>
<linearGradient id="bud" x1="0" y1="0" x2="1" y2="0">
<stop offset="0" stop-color="#4c4238"/><stop offset="0.450" stop-color="#74634e"/><stop offset="1" stop-color="#4c4034"/>
</linearGradient>
<filter id="bl1" x="-30%" y="-30%" width="160%" height="160%"><feGaussianBlur stdDeviation="5"/></filter>
</defs>
<g id="g_img1">
<rect x="524" y="480" width="304" height="202" fill="url(#sky2)"/>
<path d="M524 480 L668 480 L670 492 L667 505 L671 520 L668 540 L672 560 L669 580 L673 600 L670 682 L524 682 Z" fill="url(#sky1)"/>
<path d="M668 480 L670 492 L667 505 L671 520 L668 540 L672 560 L669 580 L673 600" fill="none" stroke="#d4dcf0" stroke-width="2.500" opacity="0.700"/>
<!-- clouds on blue -->
<g filter="url(#bl1)"><ellipse cx="700" cy="540" rx="22" ry="30" fill="#d4e6f8" opacity="0.700"/><ellipse cx="730" cy="512" rx="30" ry="9" fill="#d4e6f8" opacity="0.500"/></g>
<g filter="url(#bl1)"><ellipse cx="795" cy="545" rx="12" ry="25" fill="#d8e8f8" opacity="0.500"/></g>
<!-- St Peter -->
<rect x="609.300" y="493.500" width="1.400" height="5" fill="#3a2a38"/><path d="M610 497 L613.500 509 L606.500 509 Z" fill="#3a2c40"/>
<path d="M602.500 524 L603.500 510 L616.500 510 L617.500 524 Z" fill="#2a2438"/>
<rect x="604" y="516" width="12" height="7.500" fill="#c89a48"/><path d="M606.500 516 L606.500 523.500 M610 516 L610 523.500 M613.500 516 L613.500 523.500" stroke="#3a2a28" stroke-width="1.200"/>
<path d="M578 563 Q579 540 592 531 Q610 520 628 531 Q641 540 642 563 Z" fill="#1d2840"/>
<path d="M596 532 Q590 545 588 560 M610 526 L610 560 M624 532 Q630 545 632 560" fill="none" stroke="#46587c" stroke-width="1.500"/><path d="M580 559 L640 559" stroke="#c8a050" stroke-width="1.500" stroke-dasharray="2 3"/>
<rect x="574" y="562" width="72" height="26" fill="#b88a40"/>
<rect x="574" y="562" width="72" height="5" fill="#e8c468"/>
<path d="M578 567 L578 588 M585 567 L585 588 M592 567 L592 588 M599 567 L599 588 M606 567 L606 588 M613 567 L613 588 M620 567 L620 588 M627 567 L627 588 M634 567 L634 588 M641 567 L641 588" stroke="#3a2a20" stroke-width="2.500"/>
<path d="M551 590 Q551 574 559 572 Q567 574 567 590 Z" fill="#2a2c48"/>
<rect x="558" y="566" width="2" height="7" fill="#c05040"/>
<path d="M646 590 Q646 574 654.500 572 Q663 574 663 590 Z" fill="#2a2c48"/>
<rect x="653.500" y="566" width="2" height="7" fill="#c05040"/>
<rect x="524" y="589" width="146" height="72" fill="url(#fac)"/>
<rect x="524" y="589" width="146" height="3" fill="#5a4450"/>
<path d="M530 594 L530 600 M540 594 L540 600 M550 594 L550 600 M560 594 L560 600 M570 594 L570 600 M580 594 L580 600 M590 594 L590 600 M600 594 L600 600 M610 594 L610 600 M620 594 L620 600 M630 594 L630 600 M640 594 L640 600 M650 594 L650 600 M660 594 L660 600" stroke="#c8a070" stroke-width="1.600"/>
<g fill="#f6b840"><rect x="548" y="607" width="5" height="6"/><rect x="563" y="607" width="6" height="6"/><rect x="581" y="607" width="5" height="6"/><rect x="606" y="607" width="5" height="6"/><rect x="624" y="607" width="6" height="6"/><rect x="640" y="607" width="5" height="6"/></g>
<g fill="#8a5a40"><rect x="527" y="625" width="5" height="33"/><rect x="540" y="625" width="5" height="33"/><rect x="557" y="625" width="4" height="33"/><rect x="566" y="625" width="4" height="33"/><rect x="594" y="625" width="4" height="33"/><rect x="603" y="625" width="4" height="33"/><rect x="619" y="625" width="4" height="33"/><rect x="632" y="625" width="4" height="33"/><rect x="649" y="625" width="5" height="33"/></g>
<g fill="#f8c040"><rect x="532" y="628" width="6" height="14"/><rect x="574" y="630" width="6" height="10"/><rect x="609" y="630" width="6" height="10"/><rect x="624" y="628" width="6" height="12"/><rect x="660" y="626" width="6" height="14"/><rect x="626" y="648" width="6" height="10"/></g>
<ellipse cx="535" cy="655" rx="7" ry="9" fill="#f0a030" opacity="0.800"/>
<path d="M524 662 L600 660 Q630 652 670 655 L670 682 L524 682 Z" fill="#0e0c14"/>
<!-- watermark-like tower -->
<path d="M585 552 L600 600 L598 682 M600 600 L560 610 M598 640 L612 682" fill="none" stroke="#d8d0d8" stroke-width="1.200" opacity="0.450"/>
<path d="M577 560 L590 548 L603 560 L598 582 L584 582 Z" fill="none" stroke="#e0d8e0" stroke-width="1" opacity="0.450"/>
<!-- tree left-bottom (blue side) -->
<path d="M668 602 Q676 598 678 606 Q686 612 684 622 Q692 630 690 642 Q698 650 700 662 Q708 668 710 682 L668 682 Z" fill="#2b5a22"/>
<path d="M670 620 Q676 622 678 634 Q684 640 684 652 L670 660 Z" fill="#1e4418"/>
<!-- Buddha -->
<path d="M689 644 Q690 620 700 606 L716 578 Q730 566 742 564 L760 564 Q776 566 790 580 Q802 600 806 640 Q808 660 807 672 L689 672 Z" fill="url(#bud)"/>
<path d="M734 574 Q752 566 786 578 L782 594 Q756 585 738 592 Z" fill="#a08c68" opacity="0.850"/>
<path d="M726 530 Q724 508 738 503 Q750 500 763 503 Q777 508 775 530 L775 548 Q772 552 770 546 L770 534 L731 534 L731 546 Q729 552 726 548 Z" fill="#4c4c4a"/>
<path d="M731 528 Q750 522 770 528 L770 546 Q766 558 750 560 Q735 558 731 546 Z" fill="#74665a"/>
<path d="M737 536 L746 536 M755 536 L764 536" stroke="#4a4238" stroke-width="1"/>
<path d="M746 549 Q750 551 755 549" stroke="#5a4a40" stroke-width="1" fill="none"/>
<rect x="740" y="556" width="20" height="12" fill="#665848"/>
<path d="M696 578 L697 568 L700 566 L701 576 L703 565 L706 564 L707 576 L709 565 L712 565 L712 577 L714 569 L716 569 L717 590 Q716 604 708 607 Q698 606 696 596 Z" fill="#6e6a5a"/><path d="M697 590 Q706 586 716 592 Q715 604 708 607 Q698 606 696.500 596 Z" fill="#8a9080"/>
<path d="M698 606 L716 604 L722 640 L700 650 Z" fill="#75695a"/>
<path d="M689 650 Q720 640 750 652 Q780 640 807 650 L807 672 L689 672 Z" fill="#3e3228" opacity="0.850"/>
<!-- trees right -->
<path d="M828 480 L828 545 Q818 540 820 528 Q812 520 818 508 Q814 496 822 490 Q822 482 828 480 Z" fill="#3a7028"/>
<path d="M828 548 Q814 546 808 556 Q798 560 796 574 Q786 584 790 600 Q786 612 794 622 Q794 640 802 650 Q804 668 812 682 L828 682 Z" fill="#4a7c2c"/><path d="M806 560 Q800 570 804 580 M796 590 Q802 600 798 612" stroke="#a9cdf2" stroke-width="3" fill="none" opacity="0.700"/><path d="M812 566 Q822 560 828 566 L828 590 Q816 586 812 566 Z" fill="#6a9a3a"/>
<path d="M828 600 Q816 604 812 620 Q806 640 816 660 L828 670 Z" fill="#2a5a1e"/>
<!-- base -->
<rect x="706" y="671" width="102" height="11" fill="#e0d0a8"/>
<path d="M706 672 L808 672" stroke="#f0e6c8" stroke-width="2"/>
<path d="M712 674 L712 682 M724 674 L724 682 M736 674 L736 682 M748 674 L748 682 M760 674 L760 682 M772 674 L772 682 M784 674 L784 682 M796 674 L796 682" stroke="#b8a880" stroke-width="1.300"/>
<!-- yin yang -->
<g>
<circle cx="753" cy="620" r="37" fill="#f6f4f0" opacity="0.880"/>
<path d="M753 583 A37 37 0 0 0 753 657 A18.500 18.500 0 0 1 753 620 A18.500 18.500 0 0 0 753 583 Z" fill="#5a4632"/>

<circle cx="753" cy="601.500" r="4" fill="#f4f2ee"/>
<circle cx="753" cy="638.500" r="4" fill="#4a3a2a"/>
</g>
<circle cx="796" cy="630" r="4" fill="#e8e8e0" opacity="0.800"/>
</g>
</svg>
<!--/IMG1-->
<!--IMG2--><svg class="ic" style="left:859.500px;top:469px" width="317.500" height="233" viewBox="859.500 469 317.500 233">
<defs>
<linearGradient id="s21" x1="0" y1="0" x2="0" y2="1"><stop offset="0" stop-color="#6a9ade"/><stop offset="0.450" stop-color="#8fb6ea"/><stop offset="0.800" stop-color="#b8d0f0"/><stop offset="1" stop-color="#ccdef4"/></linearGradient>
<linearGradient id="s22" x1="0" y1="0" x2="0" y2="1"><stop offset="0" stop-color="#7fb2ee"/><stop offset="0.500" stop-color="#a2c8f4"/><stop offset="1" stop-color="#c4defa"/></linearGradient>
<linearGradient id="s23" x1="0" y1="0" x2="0" y2="1"><stop offset="0" stop-color="#1430a0"/><stop offset="0.500" stop-color="#2450c4"/><stop offset="1" stop-color="#4a7ad8"/></linearGradient>
<linearGradient id="ter" x1="0" y1="0" x2="0" y2="1"><stop offset="0" stop-color="#f4e2a8"/><stop offset="0.550" stop-color="#f0d088"/><stop offset="0.800" stop-color="#a88850"/><stop offset="1" stop-color="#3a2c20"/></linearGradient>
<filter id="bl2" x="-30%" y="-30%" width="160%" height="160%"><feGaussianBlur stdDeviation="1.500"/></filter>
</defs>
<g id="g_img2">
<rect x="859.500" y="469" width="317.500" height="233" fill="#00005e"/>
<!-- TL: Taj Mahal -->
<rect x="865" y="474.500" width="150" height="105.500" fill="url(#s21)"/>
<g fill="#efedf0">
<rect x="877.500" y="504" width="5.500" height="51"/><circle cx="880.250" cy="502" r="2.500"/>
<rect x="892.500" y="516" width="4.500" height="36"/><circle cx="894.750" cy="514.500" r="2.200"/>
<rect x="983.500" y="516" width="4.500" height="36"/><circle cx="985.750" cy="514.500" r="2.200"/>
<rect x="997" y="504" width="5.500" height="51"/><circle cx="999.750" cy="502" r="2.500"/>
<rect x="939.600" y="481" width="1.300" height="9"/>
<path d="M927 519 L927 513 Q921 503 928 495 Q934 489 940.200 488.500 Q946.500 489 952.500 495 Q959.500 503 953.500 513 L953.500 519 Z"/>
<path d="M915 522 Q915 514 920.500 512 Q926 514 926 522 Z"/><path d="M954 522 Q954 514 959.500 512 Q965 514 965 522 Z"/>
<rect x="907" y="520" width="67.500" height="32"/>
<rect x="891" y="551" width="116" height="6"/>
</g>
<path d="M946 490 Q958 500 952 514 L953.500 519 L947 519 Q954 504 946 490 Z" fill="#cfc8cc"/><path d="M933 551 L933 536 Q940.300 525 947.700 536 L947.700 551 Z" fill="#b0a8b2"/>
<g fill="#c8c2cc"><path d="M913 535 Q916.500 529 920 535 L920 542 L913 542 Z"/><path d="M961 535 Q964.500 529 968 535 L968 542 L961 542 Z"/><path d="M913 545 L920 545 L920 551 L913 551 Z"/><path d="M961 545 L968 545 L968 551 L961 551 Z"/><rect x="924" y="530" width="5" height="21"/><rect x="952" y="530" width="5" height="21"/></g>
<rect x="865" y="556" width="150" height="24" fill="#2f7a2c"/>
<path d="M865 552 L893 555 L893 560 L925 560 L925 568 L865 580 Z" fill="#14200f"/>
<path d="M1015 540 L1004 545 L1002 556 L990 556 L990 560 L957 560 L957 568 L1015 580 Z" fill="#14200f"/>
<g fill="#101a0c"><rect x="869" y="556" width="5" height="22"/><rect x="880" y="556" width="5" height="20"/><rect x="893" y="557" width="4" height="17"/><rect x="905" y="557" width="4" height="15"/><rect x="914" y="557" width="4" height="13"/><rect x="964" y="557" width="4" height="13"/><rect x="973" y="557" width="4" height="15"/><rect x="984" y="557" width="4" height="17"/><rect x="996" y="556" width="5" height="20"/><rect x="1006" y="556" width="5" height="22"/></g>
<path d="M932 562 L955 562 L976.500 580 L914 580 Z" fill="#c8a0a0"/>
<path d="M934.750 565 L952 565 L961.400 580 L927.600 580 Z" fill="#a4ccbc"/>
<rect x="868" y="477" width="54" height="11.700" fill="#0c0c78"/>
<!-- TR: Himeji -->
<rect x="1023.500" y="474.500" width="142.500" height="105.500" fill="url(#s22)"/>
<g filter="url(#bl2)"><ellipse cx="1135" cy="482" rx="28" ry="5" fill="#e4eefa" opacity="0.700"/><ellipse cx="1080" cy="500" rx="30" ry="4" fill="#d4e6f8" opacity="0.500"/></g>
<g>
<path d="M1108.300 487 L1112 492 L1130 499.500 L1126 500.500 L1101 500.500 L1097.800 499.500 L1105 492 Z" fill="#4a4a5a"/>
<rect x="1103" y="500" width="24" height="6.500" fill="#e8e2d4"/>
<path d="M1098 505 L1131 505 L1135 511.700 L1093.500 511.700 Z" fill="#54545f"/>
<rect x="1098" y="511.500" width="34" height="7" fill="#e6e0d0"/>
<path d="M1097 517 L1136 517 L1141 523.500 L1094 523.500 Z" fill="#54545f"/>
<rect x="1096" y="523" width="42" height="4" fill="#e4decf"/>
<path d="M1094 525.500 L1139 525.500 L1143.800 532 L1090 532 Z" fill="#5a5a66"/>
<rect x="1091" y="531.500" width="50.600" height="17" fill="#e8e1cb"/>
<path d="M1092 540 L1141 540" stroke="#9a9688" stroke-width="1.200"/>
<path d="M1063 509 L1072 516 L1072 519.600 L1054 519.600 L1054 516 Z" fill="#60606c"/>
<rect x="1057.500" y="519" width="13" height="7" fill="#eeeae0"/>
<path d="M1086 511 L1091 516 L1091 525 L1081 525 L1081 516 Z" fill="#5a5a66"/>
<path d="M1052 525 L1091 525 L1093 530.500 L1049 530.500 Z" fill="#6a6a78"/>
<rect x="1050" y="530" width="42" height="9.500" fill="#ece8de"/>
<path d="M1050 534.500 L1092 534.500" stroke="#a8a6a0" stroke-width="1"/>
</g>
<path d="M1023.500 540 Q1030 536 1036 539 Q1042 535 1048 538 Q1056 536 1062 541 Q1072 540 1080 544 Q1090 543 1096 548 Q1110 546 1124 548 Q1134 546 1138 538 Q1144 531 1152 532 Q1160 531 1166 536 L1166 580 L1023.500 580 Z" fill="#30481f"/>
<g filter="url(#bl2)">
<path d="M1030 548 Q1045 540 1060 548 Q1050 556 1034 556 Z M1075 552 Q1095 546 1110 556 Q1095 562 1080 560 Z M1125 552 Q1145 544 1162 552 Q1150 560 1130 560 Z M1040 566 Q1060 560 1080 568 Q1060 574 1042 572 Z M1100 568 Q1125 562 1150 570 Q1125 576 1104 574 Z" fill="#5a7440"/>
<path d="M1023.500 562 Q1040 558 1050 566 Q1036 572 1023.500 572 Z M1084 572 Q1100 566 1112 574 L1100 580 L1086 580 Z M1140 574 Q1155 568 1166 572 L1166 580 L1142 580 Z" fill="#1c2c14"/>
<path d="M1102 556 Q1108 566 1106 580" stroke="#8a8a78" stroke-width="1.500" fill="none"/>
</g>
<path d="M1023.500 536 Q1028 534 1030 540 L1023.500 546 Z" fill="#5a6a48"/>
<rect x="1026" y="477" width="63.400" height="11.700" fill="#0c0c78"/>
<!-- BL: Temple of Heaven -->
<rect x="865" y="586" width="148.500" height="103.500" fill="url(#s23)"/>
<g filter="url(#bl2)" fill="#eef2fc" opacity="0.900">
<path d="M956 594 Q980 590 1008 588 Q985 598 960 600 Z"/><path d="M965 612 Q990 602 1013 600 L1013 608 Q990 612 968 618 Z"/><path d="M972 632 Q995 622 1013 622 L1013 628 Q995 632 975 636 Z"/>
<path d="M884 622 Q905 610 925 612 Q905 620 888 628 Z"/><path d="M868 640 Q890 630 910 632 Q890 640 870 646 Z"/><path d="M975 646 Q995 640 1010 642 Q995 648 978 650 Z"/><path d="M925 596 Q945 590 955 592 Q940 598 928 600 Z"/>
</g>
<path d="M937 595.500 L938.500 600 L938 608 L936 608 L935.500 600 Z" fill="#4a3a38"/>
<path d="M917.500 618 Q919 611 930 608.500 L944 608.500 Q956 611 957.750 618 Q940 621 917.500 618 Z" fill="#191820"/>
<rect x="922" y="618" width="31" height="6" fill="#6a5030"/>
<path d="M909.600 634 Q912 627 922 625 L953 625 Q963 627 965.700 634 Q940 638 909.600 634 Z" fill="#191820"/>
<rect x="915" y="635" width="45" height="6.500" fill="#5a4028"/>
<path d="M905.300 648 Q908 641 918 639.500 L958 639.500 Q968 641 970.700 648 Q940 652.500 905.300 648 Z" fill="#17161e"/>
<rect x="910.300" y="649.500" width="53.200" height="7.500" fill="#c04a22"/>
<path d="M912 653 L962 653" stroke="#f0a040" stroke-width="1.500" stroke-dasharray="2 2"/>
<rect x="865" y="656.750" width="148.500" height="33" fill="url(#ter)"/>
<path d="M865 658 L1013.500 658 M865 666.500 L1013.500 666.500 M865 675 L1013.500 675" stroke="#fff6d4" stroke-width="2" opacity="0.900"/>
<path d="M865 662 L1013.500 662 M865 670.500 L1013.500 670.500" stroke="#c8a050" stroke-width="1" opacity="0.700"/>
<path d="M985 657 L1013.500 662 L1013.500 689.500 L1004 689.500 Z" fill="#f4ecd4"/>
<path d="M992 660 L1010 689" stroke="#8a7850" stroke-width="2"/>
<g fill="#2a1a0c"><ellipse cx="873" cy="683" rx="5" ry="6.500"/><ellipse cx="905" cy="682" rx="4.500" ry="7"/><ellipse cx="939" cy="682" rx="4.500" ry="7"/><ellipse cx="974" cy="683" rx="4.500" ry="6.500"/><rect x="865" y="686" width="130" height="3.500"/><ellipse cx="889" cy="686" rx="4" ry="4"/><ellipse cx="922" cy="686" rx="4" ry="4"/><ellipse cx="957" cy="686" rx="4" ry="4"/></g>
<rect x="865" y="588.500" width="46.750" height="11.500" fill="#0c0c78"/>
<!-- BR: Mosque -->
<rect x="1015.700" y="581.700" width="153.300" height="108.300" fill="#070408"/>
<radialGradient id="glw" cx="0.500" cy="0.500" r="0.500"><stop offset="0" stop-color="#fff8c0"/><stop offset="0.400" stop-color="#f8d870" stop-opacity="0.800"/><stop offset="1" stop-color="#c89040" stop-opacity="0"/></radialGradient>
<g fill="#ecd6a0">
<rect x="1044.800" y="596" width="5.400" height="48"/><ellipse cx="1047.500" cy="592" rx="2.600" ry="4"/><rect x="1043.500" y="596.500" width="8" height="3.500" fill="#f4e4b4"/>
<rect x="1083.300" y="596" width="5.400" height="48"/><ellipse cx="1086" cy="592" rx="2.600" ry="4"/><rect x="1082" y="596.500" width="8" height="3.500" fill="#f4e4b4"/>
<rect x="1121.500" y="620" width="4" height="24"/><ellipse cx="1123.500" cy="617" rx="2.200" ry="3"/>
<rect x="1159" y="613" width="3.600" height="15"/><ellipse cx="1160.800" cy="610.500" rx="2" ry="2.800"/>
</g>
<path d="M1140 633 Q1142 622 1153.400 619.700 Q1165 622 1167 633 Z" fill="#a48c62"/>
<rect x="1123.600" y="631.600" width="40.200" height="13.500" fill="#a45a2a"/>
<path d="M1130 644 L1143 634 L1156 644 Z" fill="#d48c3c"/>
<rect x="1016" y="643.500" width="28" height="32.500" fill="#c09050"/>
<rect x="1089.400" y="642" width="79.600" height="34" fill="#c8a050"/>
<rect x="1089.400" y="642" width="79.600" height="3.500" fill="#e8d090"/>
<rect x="1016" y="643.500" width="28" height="3" fill="#e0c484"/>
<rect x="1044" y="619.700" width="45.400" height="56.300" fill="#b4843e"/>
<rect x="1044" y="619.700" width="45.400" height="3" fill="#e4c884"/>
<path d="M1051 676 L1051 640 Q1066.700 622 1082.500 640 L1082.500 676 Z" fill="#d2a24c"/>
<path d="M1057 676 L1057 654 Q1066.700 642 1076.500 654 L1076.500 676 Z" fill="#a87830"/>
<rect x="1063" y="667" width="8" height="9" fill="#2a1c0c"/>
<circle cx="1066.300" cy="648" r="9" fill="url(#glw)"/>
<circle cx="1066.300" cy="648" r="3.500" fill="#f8f088"/>
<circle cx="1038.800" cy="654" r="9" fill="url(#glw)"/>
<path d="M1019.400 660 L1019.400 653.500 Q1022.400 648 1025.400 653.500 L1025.400 660 Z" fill="#f6f2d8"/><rect x="1021.400" y="655" width="2" height="5" fill="#3c2c14"/>
<path d="M1090 660 L1090 653 Q1094.600 646 1099 653 L1099 660 Z" fill="#e0c890"/>
<path d="M1106.2 660 L1106.2 652 Q1111.7 643 1117.2 652 L1117.2 660 Z" fill="#f8f6dc"/><path d="M1109.5 660 L1109.5 654 Q1111.7 650 1113.9 654 L1113.9 660 Z" fill="#3c2c14"/><path d="M1121.1 660 L1121.1 652 Q1126.6 643 1132.1 652 L1132.1 660 Z" fill="#f8f6dc"/><path d="M1124.3999999999999 660 L1124.3999999999999 654 Q1126.6 650 1128.8 654 L1128.8 660 Z" fill="#3c2c14"/><path d="M1137.5 660 L1137.5 652 Q1143 643 1148.5 652 L1148.5 660 Z" fill="#f8f6dc"/><path d="M1140.8 660 L1140.8 654 Q1143 650 1145.2 654 L1145.2 660 Z" fill="#3c2c14"/><path d="M1154.5 660 L1154.5 652 Q1160 643 1165.5 652 L1165.5 660 Z" fill="#f8f6dc"/><path d="M1157.8 660 L1157.8 654 Q1160 650 1162.2 654 L1162.2 660 Z" fill="#3c2c14"/>
<path d="M1090.1 676 L1090.1 669 Q1094.6 662 1099.1 669 L1099.1 676 Z" fill="#5a3c18"/><path d="M1107.2 676 L1107.2 669 Q1111.7 662 1116.2 669 L1116.2 676 Z" fill="#5a3c18"/><path d="M1122.1 676 L1122.1 669 Q1126.6 662 1131.1 669 L1131.1 676 Z" fill="#5a3c18"/><path d="M1138.5 676 L1138.5 669 Q1143 662 1147.5 669 L1147.5 676 Z" fill="#5a3c18"/><path d="M1155.5 676 L1155.5 669 Q1160 662 1164.5 669 L1164.5 676 Z" fill="#5a3c18"/>
<path d="M1020 676 L1020 668 Q1024 663 1028 668 L1028 676 Z M1033 676 L1033 668 Q1037 663 1041 668 L1041 676 Z" fill="#5a3c18"/>
<rect x="1015.700" y="676" width="153.300" height="14" fill="#1c0e08"/>
<path d="M1026 679 L1060 679" stroke="#f4e8c0" stroke-width="1.800" stroke-dasharray="3 1.500"/>
<circle cx="1135.500" cy="680" r="2" fill="#f8e0a0"/><circle cx="1157" cy="681" r="2" fill="#f8e0a0"/><circle cx="1151" cy="679" r="1.300" fill="#f8e0a0"/>
<rect x="1104.300" y="581.700" width="64" height="20.800" fill="#10108a"/>
</g>
</svg>
<span class="t" style="left:871px;top:479px;font-size:8px;font-weight:bold;color:#fff;letter-spacing:-0.100px">Тадж- Махал</span>
<span class="t" style="left:1028.500px;top:479.300px;font-size:7.600px;font-weight:bold;color:#fff;letter-spacing:-0.250px">Замок Химедзи</span>
<span class="t" style="left:867.500px;top:590.500px;font-size:8px;font-weight:bold;color:#fff;letter-spacing:-0.100px">Храм Неба</span>
<span class="t" style="left:1108.500px;top:584px;font-size:8px;font-weight:bold;color:#fff;letter-spacing:-0.200px">Мечеть имама</span>
<span class="t" style="left:1118.500px;top:593.200px;font-size:8px;font-weight:bold;color:#fff;letter-spacing:-0.200px">в Загросе</span>
<!--/IMG2-->
<span class="sl" id="t_h" style="left:767.71px;top:215.300px;font-size:17px;font-weight:bold;color:#222;transform:scaleX(1.180);letter-spacing:0.154px">Введение</span>
<span class="sl" id="t_L1" style="left:527.40px;top:240.70px;transform:scaleX(1.055);letter-spacing:0.042px">Разделение данных сторон происходит не только</span>
<span class="sl" id="t_L2" style="left:515.30px;top:267.73px;transform:scaleX(1.055);letter-spacing:-0.058px">на основе географического положения, но и на</span>
<span class="sl" id="t_L3" style="left:515.30px;top:294.76px;transform:scaleX(1.055);letter-spacing:0.314px">разделении народа, языка, быта, культуры, науки,</span>
<span class="sl" id="t_L4" style="left:515.30px;top:321.79px;transform:scaleX(1.055);letter-spacing:0.157px">экономики и политики. Так как это разные</span>
<span class="sl" id="t_L5" style="left:515.30px;top:348.82px;transform:scaleX(1.055);letter-spacing:0.133px">культуры у них есть различия: на Востоке культура</span>
<span class="sl" id="t_L6" style="left:515.30px;top:375.85px;transform:scaleX(1.055);letter-spacing:0.113px">очень гибкая, она не вмешивается в развитие мира.</span>
<span class="sl" id="t_L7" style="left:515.30px;top:402.88px;transform:scaleX(1.055);letter-spacing:0.167px">А на Западе культура идет вместе с развитием</span>
<span class="sl" id="t_L8" style="left:515.30px;top:429.91px;transform:scaleX(1.055);letter-spacing:-0.033px">страны. Она внедряет новое, но разрушает старое.</span>
<!--/SLIDE4--></div></div>
<div class="abs" style="left:83px;top:184px;width:1194px;height:1px;background:#e0dfdd"></div>
<div id="status"></div>
<div class="abs" style="left:387px;top:729px;width:890px;height:2px;background:#d2d1d0"></div>
<span class="t" id="t_s1" style="left:100.00px;top:740.30px;font-size:14px;color:#605e5c;letter-spacing:-0.194px">Слайд 4 из 14</span>
<span class="t" id="t_s2" style="left:212.00px;top:740px;font-size:14.500px;color:#605e5c;letter-spacing:-0.091px">русский</span>
<span class="t" id="t_s3" style="left:791.71px;top:740px;font-size:14.500px;color:#605e5c;letter-spacing:-0.086px">Помочь улучшить Office</span>
<svg class="ic" style="left:970px;top:738px" width="16" height="15" viewBox="0 0 16 15"><path d="M4.500 4 L8 1 L11.500 4" fill="none" stroke="#605e5c" stroke-width="1.200"/><path d="M0 7 L16 7 M0 10.500 L16 10.500 M0 14 L10 14" stroke="#605e5c" stroke-width="1.200"/></svg>
<span class="t" id="t_s4" style="left:992.00px;top:740.30px;font-size:14px;color:#605e5c;letter-spacing:-0.125px">Заметки</span>
<div class="abs" style="left:1053.500px;top:732.500px;width:42px;height:27px;background:#c8c6c4"></div>
<svg class="ic" style="left:1065px;top:738px" width="19" height="15" viewBox="0 0 19 15"><rect x="0.700" y="0.700" width="17.600" height="13.600" fill="none" stroke="#484644" stroke-width="1.300"/><path d="M4.500 0.700 L4.500 14.300" stroke="#484644" stroke-width="1.200"/><rect x="7.500" y="3.500" width="8" height="5" fill="none" stroke="#484644" stroke-width="1.200"/></svg>
<svg class="ic" style="left:1109px;top:738px" width="19" height="15" viewBox="0 0 19 15"><rect x="0.700" y="0.700" width="7" height="5.300" fill="none" stroke="#605e5c" stroke-width="1.300"/><rect x="11.300" y="0.700" width="7" height="5.300" fill="none" stroke="#605e5c" stroke-width="1.300"/><rect x="0.700" y="9" width="7" height="5.300" fill="none" stroke="#605e5c" stroke-width="1.300"/><rect x="11.300" y="9" width="7" height="5.300" fill="none" stroke="#605e5c" stroke-width="1.300"/></svg>
<svg class="ic" style="left:1155px;top:736px" width="16" height="18" viewBox="0 0 16 18"><path d="M0 1 L16 1 M1.500 1 L1.500 9.500 L14.500 9.500 L14.500 1 M8 9.500 L8 16 M4 16.500 L12 16.500" fill="none" stroke="#605e5c" stroke-width="1.300"/></svg>
<span class="t" id="t_s5" style="left:1195.21px;top:740.30px;font-size:14px;color:#605e5c;letter-spacing:-0.313px">60%</span>
<svg class="ic" style="left:1243px;top:736.500px" width="18" height="18" viewBox="0 0 18 18"><rect x="5.200" y="5.200" width="7.600" height="7.600" fill="none" stroke="#605e5c" stroke-width="1.300"/><path d="M6.300 3.300 L9 1 L11.700 3.300 M6.300 14.700 L9 17 L11.700 14.700 M3.300 6.300 L1 9 L3.300 11.700 M14.700 6.300 L17 9 L14.700 11.700" fill="none" stroke="#605e5c" stroke-width="1.300"/></svg>

<div id="taskbar"></div>
<!-- windows logo -->
<svg class="ic" style="left:15.500px;top:771.500px" width="17" height="17" viewBox="0 0 17 17"><path d="M0 2.300 L7.500 1.200 L7.500 8 L0 8 Z M8.500 1.050 L17 0 L17 8 L8.500 8 Z M0 9 L7.500 9 L7.500 15.800 L0 14.700 Z M8.500 9 L17 9 L17 17 L8.500 15.950 Z" fill="#fff"/></svg>
<svg class="ic" style="left:63px;top:771px" width="18" height="18" viewBox="0 0 18 18"><circle cx="11" cy="7" r="5.500" fill="none" stroke="#fff" stroke-width="1.400"/><path d="M7 11 L1 17" stroke="#fff" stroke-width="1.500"/></svg>
<svg class="ic" style="left:111px;top:771px" width="18" height="17" viewBox="0 0 18 17"><path d="M1 0.500 L1 3 M12 0.500 L12 3 M1 14 L1 16.500 M12 14 L12 16.500 M1 1 L12 1 M1 16 L12 16" fill="none" stroke="#fff" stroke-width="1.300"/><rect x="1" y="5" width="11" height="7" fill="none" stroke="#fff" stroke-width="1.300"/><path d="M15.500 0.500 L15.500 3 M15.500 5 L15.500 9 M15.500 11 L15.500 16.500" stroke="#fff" stroke-width="1.600"/></svg>
<div class="abs" style="left:147px;top:760px;width:42px;height:36.500px;background:#4a4a55"></div>
<div class="abs" style="left:190px;top:760px;width:3px;height:36.500px;background:#3a3a45"></div>
<!-- teams icon -->
<svg class="ic" style="left:158px;top:767px" width="28" height="26" viewBox="0 0 28 26"><circle cx="20.500" cy="6" r="3" fill="#5059c9"/><circle cx="13.500" cy="5" r="3.800" fill="#7b83eb"/><path d="M17 9.500 L26 9.500 L26 16 Q26 20 21.500 20 L17 20 Z" fill="#5059c9"/><path d="M7 9.500 L19 9.500 L19 18 Q19 23 13 23 Q7 23 7 18 Z" fill="#7b83eb"/><rect x="1.500" y="7" width="10.500" height="10.500" rx="1.500" fill="#4b53bc"/><path d="M4 9.800 L9.500 9.800 M6.750 9.800 L6.750 15.500" stroke="#fff" stroke-width="1.500"/><rect x="11" y="14" width="16" height="11.500" rx="5.750" fill="#d6203a"/></svg>
<span class="t" id="t_9p" style="left:171.500px;top:781.500px;font-size:10px;font-weight:bold;color:#fff;letter-spacing:-0.300px">9+</span>
<!-- explorer -->
<svg class="ic" style="left:208px;top:769px" width="24" height="21" viewBox="0 0 24 21"><path d="M1 1.500 L9 1.500 L11 4 L23 4 L23 19.500 L1 19.500 Z" fill="#f5c441"/><path d="M1 6 L23 6 L23 19.500 L1 19.500 Z" fill="#fbd968"/><path d="M5.500 11 L18.500 11 L18.500 19.500 L5.500 19.500 Z" fill="#3d8edb"/><rect x="9" y="14.500" width="6" height="5" fill="#fbd968"/></svg>
<!-- edge -->
<svg class="ic" style="left:256px;top:767px" width="26" height="26" viewBox="0 0 26 26"><defs><linearGradient id="eg1" x1="0" y1="0" x2="1" y2="0.300"><stop offset="0" stop-color="#2a86da"/><stop offset="0.550" stop-color="#2fa6d0"/><stop offset="1" stop-color="#4fd08a"/></linearGradient><linearGradient id="eg2" x1="0" y1="0" x2="1" y2="1"><stop offset="0" stop-color="#1c6ec8"/><stop offset="1" stop-color="#124a9c"/></linearGradient></defs><circle cx="13" cy="13" r="12.500" fill="url(#eg1)"/><path d="M25.400 11 Q25.800 16.500 20 16.500 L14 16.500 Q17 15.500 16.800 13 Q16.500 9.500 12.500 9.500 Q8 9.500 7.500 14.500 Q7.500 20 13 22.500 Q18 24 22.500 20.500 Q19 25.500 13 25.500 Q3 25 0.600 14 Q1 8 5 4.500 Q9 8 13 7 Q22 5 25.400 11 Z" fill="url(#eg2)"/><path d="M12.800 10.800 Q15.800 11 16 13.500 Q15.800 15.800 13.800 16 Q11.500 15.500 11.800 13 Q12 11.500 12.800 10.800 Z" fill="#28262f"/></svg>
<!-- red diamond plane -->
<svg class="ic" style="left:304px;top:767px" width="28" height="25" viewBox="0 0 28 25"><path d="M14 0.500 L20 8 L14 24.500 L8 8 Z" fill="#c32a34"/><path d="M14 4 L17.500 8.500 L14 18 L10.500 8.500 Z" fill="#e8e4e4"/><path d="M14 7 L16 10 L14 15 L12 10 Z" fill="#c32a34"/><path d="M1 11 L14 9 L27 12 L14 14.500 L6 15 Z" fill="#c9cbd0"/><path d="M4 12 L24 12.500" stroke="#6a6c72" stroke-width="0.800"/></svg>
<!-- yellow diamond -->
<svg class="ic" style="left:354px;top:767px" width="26" height="26" viewBox="0 0 26 26"><path d="M13 0.500 L25.500 13 L13 25.500 L0.500 13 Z" fill="#e6b81e"/><circle cx="13" cy="13" r="6" fill="none" stroke="#3a3010" stroke-width="2"/><path d="M7.500 7.500 L18.500 18.500 M18.500 7.500 L7.500 18.500" stroke="#3a3010" stroke-width="2"/></svg>
<!-- wot -->
<svg class="ic" style="left:407px;top:767.500px" width="18" height="24" viewBox="0 0 20 26"><path d="M5 1 L15 1 L19 5 L18 16 L10 25 L2 16 L1 5 Z" fill="#2e2e30" stroke="#b4b4b8" stroke-width="1.500"/><path d="M4.800 6.500 L15.200 6.500 M10 6.500 L10 20 M6.800 7 L6.800 13.500 L8.200 15 M13.200 7 L13.200 13.500 L11.800 15" fill="none" stroke="#e4e4e4" stroke-width="1.500"/></svg>
<!-- word -->
<svg class="ic" style="left:452px;top:767px" width="24" height="23" viewBox="0 0 24 23"><path d="M2 1 L20.500 1 L20.500 12 L22.500 17 L19 21.500 L2 21.500 Z" fill="#e9eef6"/><path d="M16 13 L23 15 L21 21 L15 20 Z" fill="#cfd8e8"/><path d="M2 4.500 L6 4.500 L8 13.500 L10.300 4.500 L13 4.500 L15.300 13.500 L17.300 4.500 L21 4.500 L17.300 17 L13.700 17 L11.600 9 L9.600 17 L6 17 Z" fill="#1e5cb3"/></svg>
<!-- tray -->
<svg class="ic" style="left:1002px;top:775px" width="14" height="9" viewBox="0 0 14 9"><path d="M1 8 L7 1.500 L13 8" fill="none" stroke="#fff" stroke-width="1.400"/></svg>
<svg class="ic" style="left:1026px;top:771px" width="14" height="17" viewBox="0 0 14 17"><rect x="4" y="0.500" width="6" height="10" rx="2.500" fill="#fff"/><path d="M1.500 7.500 Q1.500 13 7 13 Q12.500 13 12.500 7.500 M7 13 L7 16 M4 16.300 L10 16.300" fill="none" stroke="#fff" stroke-width="1.200"/></svg>
<svg class="ic" style="left:1048px;top:773px" width="18" height="15" viewBox="0 0 18 15"><rect x="4.500" y="1.500" width="12.500" height="8.500" fill="none" stroke="#fff" stroke-width="1.200"/><path d="M10.500 10 L10.500 13.500 M6.500 13.800 L15 13.800" stroke="#fff" stroke-width="1.200"/><rect x="0.600" y="0.600" width="3.800" height="6" fill="#28262f" stroke="#fff" stroke-width="1.100"/></svg>
<svg class="ic" style="left:1072px;top:773px" width="18" height="14" viewBox="0 0 18 14"><path d="M1 5 L3.500 5 L7 1.500 L7 12.500 L3.500 9 L1 9 Z" fill="none" stroke="#fff" stroke-width="1.100"/><path d="M9.500 4.500 Q11 7 9.500 9.500 M12 2.800 Q14.500 7 12 11.200 M14.500 1.200 Q18 7 14.500 12.800" fill="none" stroke="#fff" stroke-width="1.100"/></svg>
<svg class="ic" style="left:1099px;top:771px" width="19" height="17" viewBox="0 0 19 17"><path d="M2 13 Q0.500 9 4 8.500 Q7.500 8.500 6 13 Q5 16 8 15.500 Q11 14.500 13 9" fill="none" stroke="#fff" stroke-width="1.200"/><path d="M9 13.500 L10 10 L15.500 1.500 L18 3 L12.500 11.500 Z" fill="none" stroke="#fff" stroke-width="1.100"/></svg>
<span class="t" id="t_rus" style="left:1132.70px;top:774.00px;font-size:12.500px;color:#fff;transform:scaleX(0.844);transform-origin:0 50%">РУС</span>
<span class="t" id="t_time" style="left:1180.40px;top:765.00px;font-size:12.500px;color:#fff;transform:scaleX(0.837);transform-origin:0 50%">12:32</span>
<span class="t" id="t_date" style="left:1167.50px;top:782.50px;font-size:12.500px;color:#fff;transform:scaleX(0.861);transform-origin:0 50%">04.12.2020</span>
<svg class="ic" style="left:1238px;top:771px" width="19" height="18" viewBox="0 0 19 18"><path d="M0.500 0.500 L17.500 0.500 L17.500 13 L11 13 L7.500 17 L7.500 13 L0.500 13 Z" fill="#fff"/><path d="M3.500 4 L14.500 4 M3.500 7 L14.500 7 M3.500 10 L10 10" stroke="#28262f" stroke-width="1.200"/><circle cx="14.500" cy="13.500" r="3.600" fill="#28262f"/><circle cx="14.500" cy="13.500" r="2.300" fill="none" stroke="#fff" stroke-width="1.100"/><path d="M13 15 L16 12" stroke="#fff" stroke-width="1"/></svg>

<svg class="ic" style="left:1272px;top:700px" width="8" height="100" viewBox="0 0 8 100"><path d="M5 30 L8 30 L8 100 L3.200 100 L3.600 70 Z" fill="#d41424"/></svg>
</div>
</body>
</html>
